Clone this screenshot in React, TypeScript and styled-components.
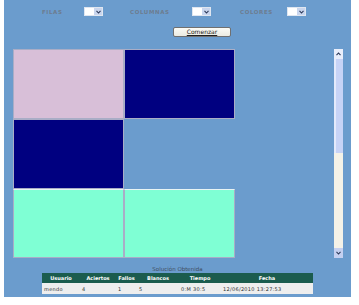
import React from 'react';
import styled, { createGlobalStyle } from 'styled-components';

const GlobalStyle = createGlobalStyle`
  html, body {
    margin: 0;
    padding: 0;
    background: #ffffff;
    font-family: "DejaVu Sans", Verdana, sans-serif;
  }
`;

type CellColor = 'thistle' | 'navy' | 'aqua' | 'empty';

const cellColors: Record<CellColor, string> = {
  thistle: '#d8bfd8',
  navy: '#000080',
  aqua: '#7fffd4',
  empty: 'transparent',
};

const board: CellColor[] = ['thistle', 'navy', 'navy', 'empty', 'aqua', 'aqua'];

const columns = ['Usuario', 'Aciertos', 'Fallos', 'Blancos', 'Tiempo', 'Fecha'];
const result = ['mendo', '4', '1', '5', '0:M 30:5', '12/06/2010 13:27:53'];
const colWidths = [38, 36, 21, 42, 42, 92];

const Page = styled.div`
  margin-left: 4px;
  width: 347px;
  height: 297px;
  background: #6b9ccd;
  overflow: hidden;
`;

const TopBar = styled.div`
  display: grid;
  grid-template-columns: 42px 46px 62px 48px 47px 20px;
  align-items: center;
  padding: 7px 0 0 38px;
  height: 9px;
`;

const Label = styled.span`
  font-size: 5.5px;
  font-weight: bold;
  letter-spacing: 0.6px;
  color: #6d7c90;
`;

const SelectBox = styled.div`
  display: flex;
  width: 19px;
  height: 9px;
  background: #ffffff;
  box-sizing: border-box;
  border: 1px solid #dfe6f0;
`;

const SelectArrow = styled.div`
  margin-left: auto;
  width: 8px;
  height: 100%;
  background: #c9d6ee;
  display: flex;
  align-items: center;
  justify-content: center;
`;

const ButtonRow = styled.div`
  padding: 11px 0 0 169px;
`;

const StartButton = styled.button`
  width: 58px;
  height: 10px;
  padding: 0;
  border: 1px solid #707070;
  border-radius: 2px;
  background: linear-gradient(#fbfbf6, #ecebe2);
  font-family: "DejaVu Sans", Verdana, sans-serif;
  font-size: 6px;
  line-height: 8px;
  color: #202020;
  text-decoration: underline;
  display: block;
`;

const Board = styled.div`
  display: flex;
  margin-top: 12px;
  padding-left: 9px;
  height: 209px;
`;

const Grid = styled.div`
  display: grid;
  grid-template-columns: 111px 111px;
  grid-template-rows: 70px 70px 69px;
`;

const Cell = styled.div<{ $color: CellColor }>`
  background: ${p => cellColors[p.$color]};
  box-sizing: border-box;
  border: 1px solid ${p => (p.$color === 'empty' ? 'transparent' : '#a9adc6')};
  border-top-color: ${p => (p.$color === 'aqua' ? '#e8f4f4' : p.$color === 'empty' ? 'transparent' : '#a9adc6')};
`;

const ScrollBar = styled.div`
  margin-left: 99px;
  width: 9px;
  display: flex;
  flex-direction: column;
  background: #f4f2e8;
`;

const ScrollArrow = styled.div<{ $bg: string }>`
  height: 10px;
  background: ${p => p.$bg};
  display: flex;
  align-items: center;
  justify-content: center;
`;

const ScrollThumb = styled.div`
  height: 94px;
  background: #c7d3f6;
  border-left: 2px solid #e4eafb;
  box-sizing: border-box;
`;

const ScrollTrack = styled.div`
  flex: 1;
`;

const Caption = styled.div`
  margin-top: 7px;
  text-align: center;
  font-size: 5.5px;
  line-height: 8px;
  color: #3f4d5e;
`;

const ResultTable = styled.table`
  margin-left: 38px;
  width: 271px;
  border-collapse: collapse;
  table-layout: fixed;
  font-size: 5px;
`;

const HeadCell = styled.th`
  height: 10px;
  padding: 0;
  background: #1b5c4e;
  color: #ffffff;
  font-weight: bold;
  text-align: center;
`;

const DataCell = styled.td`
  height: 11px;
  padding: 0 0 0 2px;
  background: #eeeeee;
  color: #303030;
  text-align: left;
  letter-spacing: 0.3px;
`;

const Chevron: React.FC<{ up?: boolean }> = ({ up }) => (
  <svg width="5" height="4" viewBox="0 0 5 4">
    <path
      d={up ? 'M0.5 3.2 L2.5 1 L4.5 3.2' : 'M0.5 0.8 L2.5 3 L4.5 0.8'}
      fill="none"
      stroke="#2d3a5a"
      strokeWidth="1.1"
    />
  </svg>
);

const Select: React.FC = () => (
  <SelectBox>
    <SelectArrow>
      <Chevron />
    </SelectArrow>
  </SelectBox>
);

export default function App() {
  return (
    <>
      <GlobalStyle />
      <Page>
        <TopBar>
          <Label>FILAS</Label>
          <Select />
          <Label>COLUMNAS</Label>
          <Select />
          <Label>COLORES</Label>
          <Select />
        </TopBar>
        <ButtonRow>
          <StartButton>Comenzar</StartButton>
        </ButtonRow>
        <Board>
          <Grid>
            {board.map((c, i) => (
              <Cell key={i} $color={c} />
            ))}
          </Grid>
          <ScrollBar>
            <ScrollArrow $bg="#e9eefb">
              <Chevron up />
            </ScrollArrow>
            <ScrollThumb />
            <ScrollTrack />
            <ScrollArrow $bg="#c4d0f0">
              <Chevron />
            </ScrollArrow>
          </ScrollBar>
        </Board>
        <Caption>Solución Obtenida</Caption>
        <ResultTable>
          <colgroup>
            {colWidths.map((w, i) => (
              <col key={i} style={{ width: w }} />
            ))}
          </colgroup>
          <thead>
            <tr>
              {columns.map(c => (
                <HeadCell key={c}>{c}</HeadCell>
              ))}
            </tr>
          </thead>
          <tbody>
            <tr>
              {result.map((v, i) => (
                <DataCell key={i}>{v}</DataCell>
              ))}
            </tr>
          </tbody>
        </ResultTable>
      </Page>
    </>
  );
}
